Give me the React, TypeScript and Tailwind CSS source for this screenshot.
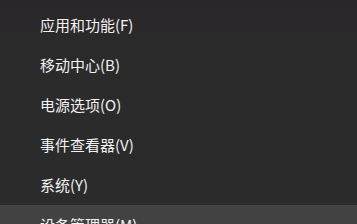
import React from "react";

const items = [
  "应用和功能(F)",
  "移动中心(B)",
  "电源选项(O)",
  "事件查看器(V)",
  "系统(Y)",
  "设备管理器(M)",
];

export default function App() {
  return (
    <div
      className="w-[357px] h-[224px] overflow-hidden bg-[linear-gradient(to_bottom,#2a2529_0px,#2b2a2b_40px,#2b2b2b_80px)] pt-[5px]"
      style={{ fontFamily: '"Microsoft YaHei", "Noto Sans CJK SC", "Noto Sans", sans-serif' }}
    >
      {items.map((t, i) => (
        <div
          key={t}
          className={`h-[40px] flex items-center pl-[40px] text-[15px] text-[#f2f2f2] ${i === 5 ? "bg-[#424242]" : ""}`}
        >
          {t}
        </div>
      ))}
    </div>
  );
}
